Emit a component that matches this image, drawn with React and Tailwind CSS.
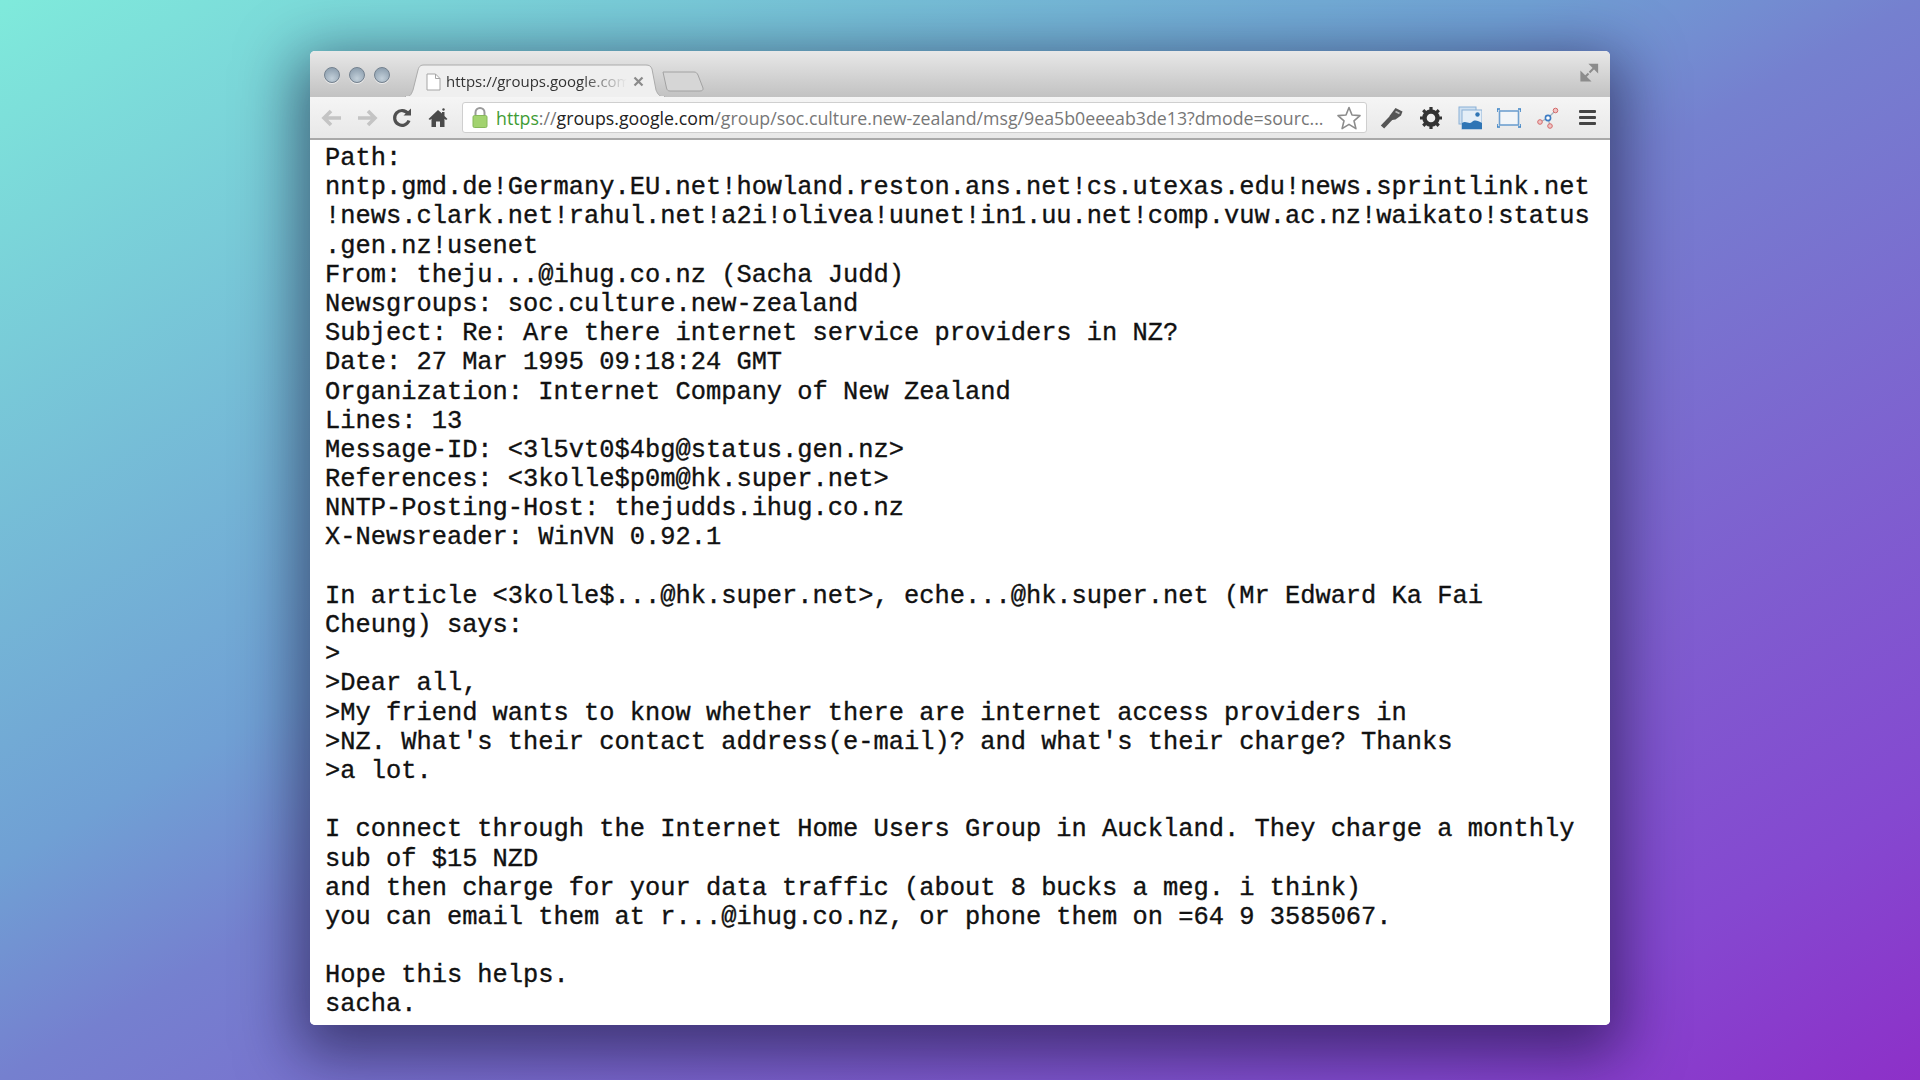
import React from 'react';

const LINES = [
  'Path:',
  'nntp.gmd.de!Germany.EU.net!howland.reston.ans.net!cs.utexas.edu!news.sprintlink.net',
  '!news.clark.net!rahul.net!a2i!olivea!uunet!in1.uu.net!comp.vuw.ac.nz!waikato!status',
  '.gen.nz!usenet',
  'From: theju...@ihug.co.nz (Sacha Judd)',
  'Newsgroups: soc.culture.new-zealand',
  'Subject: Re: Are there internet service providers in NZ?',
  'Date: 27 Mar 1995 09:18:24 GMT',
  'Organization: Internet Company of New Zealand',
  'Lines: 13',
  'Message-ID: <3l5vt0$4bg@status.gen.nz>',
  'References: <3kolle$p0m@hk.super.net>',
  'NNTP-Posting-Host: thejudds.ihug.co.nz',
  'X-Newsreader: WinVN 0.92.1',
  ' ',
  'In article <3kolle$...@hk.super.net>, eche...@hk.super.net (Mr Edward Ka Fai',
  'Cheung) says:',
  '>',
  '>Dear all,',
  '>My friend wants to know whether there are internet access providers in',
  ">NZ. What's their contact address(e-mail)? and what's their charge? Thanks",
  '>a lot.',
  ' ',
  'I connect through the Internet Home Users Group in Auckland. They charge a monthly',
  'sub of $15 NZD',
  'and then charge for your data traffic (about 8 bucks a meg. i think)',
  'you can email them at r...@ihug.co.nz, or phone them on =64 9 3585067.',
  ' ',
  'Hope this helps.',
  'sacha.',
];

const Light = () => (
  <div className="w-[16px] h-[16px] rounded-full border border-[#72808e] bg-[radial-gradient(circle_at_50%_75%,#c3d0da,#93a4b3_75%)] shadow-[0_1px_0_rgba(255,255,255,0.6)]" />
);

const Back = ({ flip }) => (
  <svg width="22" height="20" viewBox="0 0 22 20" className={flip ? 'scale-x-[-1]' : ''}>
    <path d="M10 3 L3 10 L10 17 M3.5 10 H20" fill="none" stroke="#c4c4c4" strokeWidth="3.6" />
  </svg>
);

const Toolbar = () => (
  <div className="h-[43px] flex items-center border-b-2 border-[#a9a9a9] bg-gradient-to-b from-[#f5f5f5] to-[#e8e8e8]">
    <div className="w-[152px] pl-[11px] flex items-center gap-[13px] shrink-0">
      <Back />
      <Back flip />
      <div className="ml-[1px]">
        <svg width="20" height="20" viewBox="0 0 20 20" className="block">
          <path d="M16 5.5 A7.4 7.4 0 1 0 17 12.5" fill="none" stroke="#505050" strokeWidth="3.2" />
          <path d="M11.5 7.5 H19 V0.5 Z" fill="#505050" />
        </svg>
      </div>
      <div className="ml-[3px]">
        <svg width="20" height="20" viewBox="0 0 20 20" className="block">
          <path d="M10 2 L0.5 11 L2 12 L3.5 10.8 V19 H8 V13.5 H12 V19 H16.5 V10.8 L18 12 L19.5 11 L16.5 8 V4 H14 V5.5 Z" fill="#4a4a4a" />
          <circle cx="15.5" cy="1.5" r="1.2" fill="#4a4a4a" />
        </svg>
      </div>
    </div>
    <div className="w-[905px] h-[31px] flex items-center bg-white rounded-[3px] border border-[#cfcfcf] shrink-0">
      <svg width="18" height="26" viewBox="0 0 18 26" className="ml-[8px] shrink-0">
        <path d="M4.5 11 V7.5 A4.5 4.5 0 0 1 13.5 7.5 V11" fill="none" stroke="#9a9a9a" strokeWidth="2" />
        <rect x="2" y="10.5" width="14" height="12" rx="1.5" fill="#a2d36f" stroke="#86b85a" />
      </svg>
      <div className="ml-[7px] w-[831px] pt-[1px] font-['Open_Sans',sans-serif] text-[17.75px] whitespace-nowrap overflow-hidden text-[#777]">
        <span className="text-[#3f9c35]">https</span>
        <span>://</span>
        <span className="text-[#222]">groups.google.com</span>
        /group/soc.culture.new-zealand/msg/9ea5b0eeeab3de13?dmode=sourc...
      </div>
      <svg width="26" height="26" viewBox="0 0 26 26" className="ml-[9px] shrink-0">
        <path d="M13 2.5 L16 10 L24 10.6 L18 15.8 L19.9 23.6 L13 19.4 L6.1 23.6 L8 15.8 L2 10.6 L10 10 Z" fill="#fff" stroke="#8c8c8c" strokeWidth="1.6" strokeLinejoin="round" />
      </svg>
    </div>
    <div className="ml-[13px] flex items-center gap-[15px]">
      <svg width="24" height="24" viewBox="0 0 24 24">
        <path d="M2.5 21 L12 11" stroke="#555" strokeWidth="4.6" />
        <path d="M9.5 10 L15.5 2 L22.5 5.5 L21 9.5 L15.5 13.5 L12 14 Z" fill="#555" />
        <path d="M15.5 5.5 L19.5 7.5" stroke="#bbb" strokeWidth="1.8" />
      </svg>
      <svg width="24" height="24" viewBox="0 0 24 24">
        <circle cx="12" cy="12" r="6.5" fill="none" stroke="#333" strokeWidth="4.4" />
        <path d="M12 1 V23 M1 12 H23 M4.2 4.2 L19.8 19.8 M19.8 4.2 L4.2 19.8" stroke="#333" strokeWidth="3.2" strokeDasharray="4 14" />
      </svg>
      <svg width="24" height="24" viewBox="0 0 24 24">
        <rect x="1" y="1" width="17" height="17" fill="#cfe0f0" stroke="#8ab0d6" />
        <rect x="4" y="4" width="20" height="19" fill="#e4eef7" stroke="#8ab0d6" />
        <path d="M4 23 V17 C8 14 11 19 14 16 C17 13 20 15 24 17 V23 Z" fill="#2f75b5" />
        <circle cx="19.5" cy="8.5" r="2.2" fill="#2f75b5" />
      </svg>
      <svg width="24" height="24" viewBox="0 0 24 24">
        <rect x="2.5" y="5" width="19" height="14" fill="#f2f5f8" stroke="#6fa0d0" strokeWidth="1.6" />
        <path d="M0 3 H3 M0 3 V6 M21 3 H24 M24 3 V6 M0 21 H3 M0 18 V21 M21 21 H24 M24 18 V21" stroke="#3d84c6" strokeWidth="1.6" />
      </svg>
      <svg width="24" height="24" viewBox="0 0 24 24">
        <path d="M12 12 L20 4 M12 12 L4 16 M12 12 L14 20" stroke="#a9b0b8" strokeWidth="1.2" />
        <circle cx="12" cy="12" r="2.6" fill="#fff" stroke="#3d7cc4" strokeWidth="1.6" />
        <circle cx="19.5" cy="4.5" r="2.3" fill="#f0c4c4" stroke="#d46a6a" />
        <circle cx="4" cy="16" r="2.3" fill="#f0c4c4" stroke="#d46a6a" />
        <circle cx="14" cy="20" r="2.3" fill="#f0c4c4" stroke="#d46a6a" />
      </svg>
      <div className="ml-[4px] w-[17px] flex flex-col gap-[3px]">
        <div className="h-[3px] rounded-[1px] bg-[#444]" />
        <div className="h-[3px] rounded-[1px] bg-[#444]" />
        <div className="h-[3px] rounded-[1px] bg-[#444]" />
      </div>
    </div>
  </div>
);

const TabStrip = () => (
  <div className="h-[46px] flex items-end bg-gradient-to-b from-[#e8e8e8] to-[#c2c2c2] rounded-t-[5px] relative">
    <div className="flex gap-[9px] pl-[14px] absolute left-0 top-[16px]">
      <Light />
      <Light />
      <Light />
    </div>
    <div className="ml-[95px] w-[260px] h-[33px] relative">
      <svg width="260" height="33" viewBox="0 0 260 33" className="absolute inset-0">
        <path d="M0 33 C5 33 6 31 8 26 L13 6 C14 2 16 1 19 1 H241 C244 1 246 2 247 5 L251 26 C253 31 255 33 260 33 Z" fill="#efefef" stroke="#ababab" />
        <path d="M1 33 H259" stroke="#efefef" strokeWidth="2" />
      </svg>
      <div className="relative flex items-center h-full pl-[21px] pt-[2px]">
        <svg width="15" height="18" viewBox="0 0 15 18" className="shrink-0">
          <path d="M1 1 H9.5 L14 5.5 V17 H1 Z" fill="#fff" stroke="#a5a5a5" />
          <path d="M9.5 1 V5.5 H14" fill="none" stroke="#a5a5a5" />
        </svg>
        <div className="ml-[5px] w-[181px] overflow-hidden whitespace-nowrap font-['Open_Sans',sans-serif] text-[15px] text-[#333] [mask-image:linear-gradient(90deg,#000_75%,transparent)]">
          https://groups.google.com
        </div>
        <svg width="11" height="11" viewBox="0 0 11 11" className="ml-[6px] shrink-0">
          <path d="M1.5 1.5 L9.5 9.5 M9.5 1.5 L1.5 9.5" stroke="#8a8a8a" strokeWidth="2.2" />
        </svg>
      </div>
    </div>
    <svg width="42" height="21" viewBox="0 0 42 21" className="-ml-[3px] mb-[5px] shrink-0">
      <path d="M1 1 H32 C34 1 35 2 36 4 L41 17 C41.5 19 40 20 38 20 H8 C6 20 5 19 4.5 17 Z" fill="#d6d6d6" stroke="#a2a2a2" />
    </svg>
    <svg width="19" height="19" viewBox="0 0 20 20" className="absolute right-[11px] top-[12px]">
      <path d="M10 10 L17 3 M11.5 2 H18 V8.5 Z" stroke="#8c8c8c" strokeWidth="2.2" fill="#8c8c8c" />
      <path d="M9 11 L3 17 M1.5 10.5 V18.5 H9.5 Z" stroke="#8c8c8c" strokeWidth="2.2" fill="#8c8c8c" />
    </svg>
  </div>
);

export default function App() {
  return (
    <div className="w-[1920px] h-[1080px] overflow-hidden pt-[51px] pl-[310px] bg-[linear-gradient(to_bottom_right,#7feadb_0%,#70a0d4_40%,#7580cf_50%,#8548d0_87%,#8d30c8_100%)]">
      <div className="w-[1300px] h-[974px] flex flex-col rounded-[5px] bg-white shadow-[0_18px_60px_12px_rgba(15,10,45,0.55)]">
        <TabStrip />
        <Toolbar />
        <div className="flex-1 pl-[15px] pt-[4px] rounded-b-[5px] bg-white overflow-hidden font-['Liberation_Mono','Courier_New',monospace] text-[25.4px] leading-[29.2px] text-[#111] whitespace-pre [-webkit-text-stroke:0.35px_#111]">
          {LINES.map((line, i) => (
            <div key={i} className="h-[29.2px]">{line}</div>
          ))}
        </div>
      </div>
    </div>
  );
}
